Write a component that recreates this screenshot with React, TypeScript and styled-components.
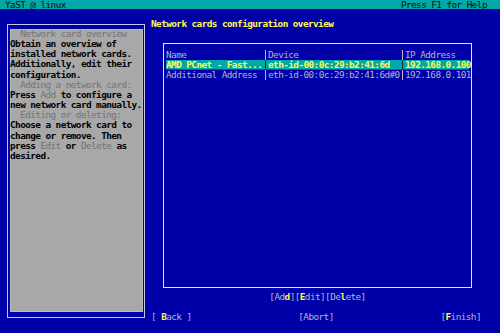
import React from "react";
import styled, { createGlobalStyle } from "styled-components";

const BLUE = "#0000a8";
const TEAL = "#00a8a8";
const YELLOW = "#fcfc54";
const GRAY = "#a8a8a8";
const DIM = "#747474";
const LIGHT = "#b4b4cc";

const GlobalStyle = createGlobalStyle`
  html, body {
    margin: 0;
    padding: 0;
    background: ${BLUE};
  }
  #root {
    width: 500px;
    height: 333px;
    overflow: hidden;
  }
`;

// glyphs a bit taller than the 5.08px cell, squeezed back with letter-spacing
const Screen = styled.div`
  width: 500px;
  height: 333px;
  display: flex;
  flex-direction: column;
  background: ${BLUE};
  font-family: "DejaVu Sans Mono", "Liberation Mono", monospace;
  font-size: 9.4px;
  letter-spacing: -0.58px;
  line-height: 10px;
  white-space: pre;
`;

const TopBar = styled.div`
  height: 9px;
  display: flex;
  align-items: center;
  justify-content: space-between;
  padding: 0 13px 0 5px;
  background: ${TEAL};
  color: #001010;
  line-height: 9px;
`;

const Body = styled.div`
  flex: 1;
  display: flex;
`;

const HelpColumn = styled.div`
  padding: 15px 0 0 7px;
`;

const HelpFrame = styled.div`
  box-sizing: border-box;
  width: 138px;
  height: 294px;
  border: 1px solid #c8c8e4;
  padding: 4px 1px 5px 2px;
  display: flex;
`;

const HelpPanel = styled.div`
  flex: 1;
  background: ${GRAY};
  box-shadow: inset 0 0 0 1px #bcbcbc;
  color: #000;
  font-weight: bold;
  line-height: 10.16px;
`;

const HelpHeading = styled.div`
  padding-left: 10.16px;
  color: ${DIM};
  font-weight: normal;
`;

const HelpLine = styled.div``;

const Keyword = styled.span`
  color: ${DIM};
  font-weight: normal;
`;

const MainColumn = styled.div`
  flex: 1;
  display: flex;
  flex-direction: column;
  padding: 10px 0 0 6px;
`;

const Title = styled.div`
  color: ${YELLOW};
  font-weight: bold;
`;

const TableArea = styled.div`
  margin: 14px 0 0 12px;
  width: 309px;
`;

const TableFrame = styled.div`
  box-sizing: border-box;
  width: 309px;
  height: 245px;
  border: 1px solid #e4e4f4;
  padding: 6px 2px 0 2px;
`;

const Row = styled.div<{ $selected?: boolean }>`
  display: flex;
  height: 10px;
  color: ${(p) => (p.$selected ? YELLOW : LIGHT)};
  font-weight: ${(p) => (p.$selected ? "bold" : "normal")};
  background: ${(p) =>
    p.$selected ? `linear-gradient(${TEAL}, ${TEAL}) 0 0 / 100% 9.5px no-repeat` : "none"};
`;

const Cell = styled.div<{ $width?: number; $sep?: string }>`
  box-sizing: border-box;
  width: ${(p) => (p.$width ? `${p.$width}px` : "auto")};
  flex: ${(p) => (p.$width ? "none" : "1")};
  min-width: 0;
  border-left: ${(p) => (p.$sep ? `1px solid ${p.$sep}` : "none")};
  padding-left: ${(p) => (p.$sep ? "2px" : "0")};
`;

const ActionBar = styled.div`
  margin-top: 4px;
  display: flex;
  justify-content: center;
  color: ${LIGHT};
`;

const NavBar = styled.div`
  margin-top: 10px;
  display: flex;
  justify-content: space-between;
  padding-right: 19px;
  color: ${LIGHT};
`;

const Hot = styled.span`
  color: ${YELLOW};
  font-weight: bold;
`;

const rows = [
  { name: "Name", device: "Device", ip: "IP Address" },
  { name: "AMD PCnet - Fast...", device: "eth-id-00:0c:29:b2:41:6d", ip: "192.168.0.100", selected: true },
  { name: "Additional Address", device: "eth-id-00:0c:29:b2:41:6d#0", ip: "192.168.0.101" },
];

export default function App() {
  return (
    <>
      <GlobalStyle />
      <Screen>
        <TopBar>
          <span>YaST @ linux</span>
          <span>Press F1 for Help</span>
        </TopBar>
        <Body>
          <HelpColumn>
            <HelpFrame>
              <HelpPanel>
                <HelpHeading>Network card overview</HelpHeading>
                <HelpLine>Obtain an overview of</HelpLine>
                <HelpLine>installed network cards.</HelpLine>
                <HelpLine>Additionally, edit their</HelpLine>
                <HelpLine>configuration.</HelpLine>
                <HelpHeading>Adding a network card:</HelpHeading>
                <HelpLine>
                  Press <Keyword>Add</Keyword> to configure a
                </HelpLine>
                <HelpLine>new network card manually.</HelpLine>
                <HelpHeading>Editing or deleting:</HelpHeading>
                <HelpLine>Choose a network card to</HelpLine>
                <HelpLine>change or remove. Then</HelpLine>
                <HelpLine>
                  press <Keyword>Edit</Keyword> or <Keyword>Delete</Keyword> as
                </HelpLine>
                <HelpLine>desired.</HelpLine>
              </HelpPanel>
            </HelpFrame>
          </HelpColumn>
          <MainColumn>
            <Title>Network cards configuration overview</Title>
            <TableArea>
              <TableFrame>
                {rows.map((r) => {
                  const sep = r.selected ? "#00305a" : LIGHT;
                  return (
                    <Row key={r.device} $selected={r.selected}>
                      <Cell $width={99}>{r.name}</Cell>
                      <Cell $width={137} $sep={sep}>{r.device}</Cell>
                      <Cell $sep={sep}>{r.ip}</Cell>
                    </Row>
                  );
                })}
              </TableFrame>
              <ActionBar>
                <span>
                  [Ad<Hot>d</Hot>][<Hot>E</Hot>dit][De<Hot>l</Hot>ete]
                </span>
              </ActionBar>
            </TableArea>
            <NavBar>
              <span>
                [ <Hot>B</Hot>ack ]
              </span>
              <span>[Abort]</span>
              <span>
                [<Hot>F</Hot>inish]
              </span>
            </NavBar>
          </MainColumn>
        </Body>
      </Screen>
    </>
  );
}
